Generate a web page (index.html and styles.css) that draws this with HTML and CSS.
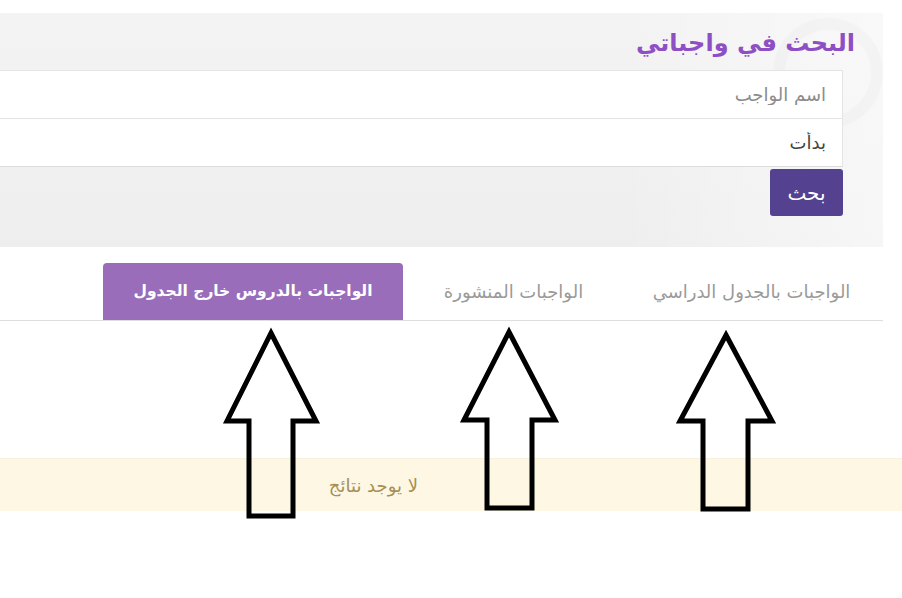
FILE: index.html
```html
<!DOCTYPE html>
<html lang="ar" dir="rtl">
<head>
  <meta charset="UTF-8" />
  <meta name="viewport" content="width=device-width, initial-scale=1.0"/>
  <title>البحث في واجباتي</title>
  <link rel="stylesheet" href="styles.css">
</head>
<body>
  <div class="page">
    <div class="search-panel">
      <h1 class="search-title">البحث في واجباتي</h1>
      <input class="search-input" type="text" placeholder="اسم الواجب" />
      <input class="search-input" type="text" value="بدأت" />
      <button class="search-button">بحث</button>
    </div>

    <ul class="tabs">
      <li class="tab tab-schedule">الواجبات بالجدول الدراسي</li>
      <li class="tab tab-published">الواجبات المنشورة</li>
      <li class="tab tab-outside active">الواجبات بالدروس خارج الجدول</li>
    </ul>

    <div class="notice">لا يوجد نتائج</div>

    <!-- annotation arrows drawn over the page -->
    <svg class="arrows" width="902" height="598" viewBox="0 0 902 598">
      <polygon points="271,333 316,421 293,421 293,516 249,516 249,421 227,421" />
      <polygon points="509,332 555,420 532,420 532,508 487,508 487,420 464,420" />
      <polygon points="726,335 772,421 748,421 748,509 703,509 703,421 680,421" />
    </svg>
  </div>
</body>
</html>
```

FILE: styles.css
```css
* {
  margin: 0;
  padding: 0;
  box-sizing: border-box;
}

body {
  background: #fff;
  font-family: 'DejaVu Sans', sans-serif;
  overflow: hidden;
}

.page {
  position: relative;
  width: 902px;
  height: 598px;
  padding-top: 13px;
}

.search-panel {
  margin-right: 19px;
  padding: 10px 40px 31px 0;
  background:
    radial-gradient(circle at 828px 60px, transparent 42px, rgba(0, 0, 0, 0.018) 44px, rgba(0, 0, 0, 0.018) 54px, transparent 56px),
    linear-gradient(to left, rgba(255, 255, 255, 0.5), rgba(255, 255, 255, 0) 30%),
    linear-gradient(#f3f3f3, #eeeeee);
}

.search-title {
  color: #8f4fc4;
  font-size: 24px;
  font-weight: bold;
  line-height: 40px;
  margin: 0 -12px 7px 0;
}

.search-input {
  display: block;
  width: calc(100% + 2px);
  height: 49px;
  border: 1px solid #e4e4e4;
  border-bottom-color: #dcdcdc;
  background: #fff;
  padding: 0 16px;
  font-family: inherit;
  font-size: 18px;
  color: #444;
  outline: none;
}

.search-input + .search-input {
  margin-top: -1px;
}

.search-input::placeholder {
  color: #8c8c8c;
}

.search-button {
  display: block;
  margin-top: 2px;
  width: 73px;
  height: 47px;
  border: none;
  border-radius: 3px;
  background: #54418f;
  color: #fff;
  font-family: inherit;
  font-size: 20px;
}

.tabs {
  list-style: none;
  display: flex;
  margin: 16px 19px 0 0;
  border-bottom: 1px solid #dedede;
}

.tab {
  height: 57px;
  line-height: 57px;
  text-align: center;
  font-size: 18px;
  color: #9a9a9a;
  white-space: nowrap;
}

.tab-schedule {
  width: 263px;
}

.tab-published {
  width: 201px;
  margin-right: 6px;
}

.tab-outside {
  width: 300px;
  margin-right: 10px;
}

.tab.active {
  background: #9a6dbb;
  color: #fff;
  font-size: 15.5px;
  font-weight: bold;
  border-radius: 4px 4px 0 0;
}

.notice {
  margin-top: 137px;
  height: 53px;
  line-height: 53px;
  background: #fdf7e4;
  border-top: 1px solid #f7f0dc;
  color: #a58f56;
  font-size: 18px;
  padding-right: 484px;
}

.arrows {
  position: absolute;
  top: 0;
  left: 0;
  pointer-events: none;
}

.arrows polygon {
  fill: none;
  stroke: #000;
  stroke-width: 5;
  stroke-linejoin: miter;
}
```
